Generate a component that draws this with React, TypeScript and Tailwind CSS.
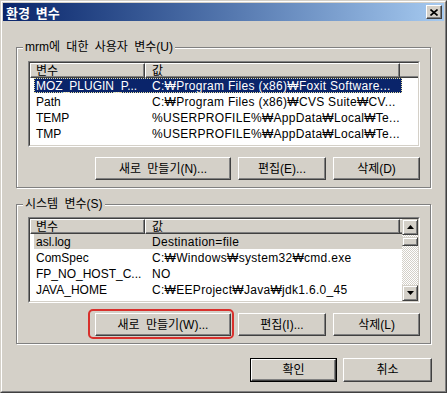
import React from 'react';

type Var = { name: string; value: string; sel?: 'blue' | 'gray' };

const userVars: Var[] = [
  { name: 'MOZ_PLUGIN_P...', value: 'C:₩Program Files (x86)₩Foxit Software...', sel: 'blue' },
  { name: 'Path', value: 'C:₩Program Files (x86)₩CVS Suite₩CV...' },
  { name: 'TEMP', value: '%USERPROFILE%₩AppData₩Local₩Te...' },
  { name: 'TMP', value: '%USERPROFILE%₩AppData₩Local₩Te...' },
];

const systemVars: Var[] = [
  { name: 'asl.log', value: 'Destination=file', sel: 'gray' },
  { name: 'ComSpec', value: 'C:₩Windows₩system32₩cmd.exe' },
  { name: 'FP_NO_HOST_C...', value: 'NO' },
  { name: 'JAVA_HOME', value: 'C:₩EEProject₩Java₩jdk1.6.0_45' },
  { name: 'JRE_HOME', value: 'C:₩EEProject₩Java₩jdk1.6.0_45₩jre' },
];

// classic raised 3D button
const Button = ({ label, w, h = 'h-[23px]', isDefault = false }: { label: string; w: string; h?: string; isDefault?: boolean }) => {
  const inner = (
    <div className="h-full w-full border border-t-white border-l-white border-r-[#404040] border-b-[#404040] shadow-[inset_-1px_-1px_0_#808080] flex items-center justify-center [word-spacing:3px]">
      {label}
    </div>
  );
  if (isDefault) {
    return <div className={`${w} ${h} border border-black`}>{inner}</div>;
  }
  return <div className={`${w} ${h}`}>{inner}</div>;
};

const Row = ({ v }: { v: Var }) => {
  const tone =
    v.sel === 'blue' ? 'bg-[#0a246a] text-white outline outline-1 outline-dotted outline-[#e8e0a0] -outline-offset-1' : v.sel === 'gray' ? 'bg-[#d4d0c8]' : '';
  return (
    <div className="h-[16px] flex pl-[4px] shrink-0">
      <div className={`flex items-center w-[368px] h-[15px] ${tone}`}>
        <span className="w-[111px] pl-[2px] whitespace-nowrap overflow-hidden">{v.name}</span>
        <span className="pl-[7px] whitespace-nowrap tracking-[0.3px]">{v.value}</span>
      </div>
    </div>
  );
};

const Header = ({ width }: { width: string }) => (
  <div className={`flex h-[15px] shrink-0 ${width} bg-[#d4d0c8]`}>
    <div className="w-[115px] h-full border border-t-white border-l-white border-r-[#404040] border-b-[#404040] shadow-[inset_-1px_-1px_0_#808080] pl-[5px] flex items-center">변수</div>
    <div className="w-[255px] h-full border border-t-white border-l-white border-r-[#404040] border-b-[#404040] shadow-[inset_-1px_-1px_0_#808080] pl-[6px] flex items-center">값</div>
    <div className="flex-1 h-full border-t border-t-white border-b border-b-[#404040] shadow-[inset_0_-1px_0_#808080]" />
  </div>
);

const Arrow = ({ up }: { up: boolean }) => (
  <div className="w-[16px] h-[16px] bg-[#d4d0c8] border border-t-[#d4d0c8] border-l-[#d4d0c8] border-r-[#404040] border-b-[#404040] shadow-[inset_1px_1px_0_#fff,inset_-1px_-1px_0_#808080] flex items-center justify-center">
    <svg width="7" height="4" viewBox="0 0 7 4">
      {up ? <path d="M3.5 0 L7 4 L0 4 Z" fill="#000" /> : <path d="M0 0 L7 0 L3.5 4 Z" fill="#000" />}
    </svg>
  </div>
);

const ListBox = ({ vars, scroll }: { vars: Var[]; scroll?: boolean }) => (
  <div className="ml-[11px] w-[392px] h-[86px] border border-t-[#808080] border-l-[#808080] border-r-white border-b-white">
    <div className="h-full border border-t-[#404040] border-l-[#404040] border-r-[#d4d0c8] border-b-[#d4d0c8] bg-white flex overflow-hidden">
      <div className="flex-1 flex flex-col overflow-hidden">
        <Header width="w-full" />
        {vars.map((v) => (
          <Row key={v.name} v={v} />
        ))}
      </div>
      {scroll && (
        <div className="w-[16px] h-full flex flex-col bg-[repeating-conic-gradient(#d4d0c8_0_25%,#ffffff_0_50%)] bg-[length:2px_2px]">
          <Arrow up />
          <div className="mt-[2px] w-[16px] h-[9px] bg-[#d4d0c8] border border-t-[#d4d0c8] border-l-[#d4d0c8] border-r-[#404040] border-b-[#404040] shadow-[inset_1px_1px_0_#fff,inset_-1px_-1px_0_#808080]" />
          <div className="flex-1" />
          <Arrow up={false} />
        </div>
      )}
    </div>
  </div>
);

const Group = ({ title, mt, listMt, children }: { title: string; mt: string; listMt: string; children: React.ReactNode }) => (
  <div className={`relative ${mt} ml-[13px] w-[415px] border border-[#808080] shadow-[inset_1px_1px_0_#fff,1px_1px_0_#fff]`}>
    <div className="absolute -top-[8px] left-[6px] px-[2px] bg-[#d4d0c8] leading-[14px] [word-spacing:3px]">{title}</div>
    <div className={listMt}>{children}</div>
  </div>
);

const ButtonRow = ({ labels, highlight }: { labels: string[]; highlight?: boolean }) => (
  <div className="mt-[10px] mb-[7px] flex justify-end gap-[7px] pr-[10px]">
    <div className="relative">
      <Button label={labels[0]} w="w-[136px]" />
      {highlight && (
        <div className="absolute -left-[7px] -right-[3px] -top-[4px] -bottom-[3px] border-2 border-[#d8302c] rounded-[5px]" />
      )}
    </div>
    <Button label={labels[1]} w="w-[88px]" />
    <Button label={labels[2]} w="w-[87px]" />
  </div>
);

export default function App() {
  return (
    <div className="w-[447px] h-[393px] bg-[#d4d0c8] border border-t-[#d4d0c8] border-l-[#d4d0c8] border-r-[#404040] border-b-[#404040] font-['Liberation_Sans','Noto_Sans_CJK_KR',sans-serif] text-[12px] text-black">
      <div className="h-full border border-t-white border-l-white border-r-[#808080] border-b-[#808080] p-px flex flex-col">
        {/* title bar */}
        <div className="h-[18px] shrink-0 bg-linear-to-r from-[#0a246a] to-[#a6caf0] flex items-center justify-between pl-[3px] pr-[2px]">
          <span className="text-white font-bold text-[13px] font-['Noto_Sans_CJK_KR',sans-serif] leading-none [word-spacing:3px]">환경 변수</span>
          <div className="w-[16px] h-[14px] bg-[#d4d0c8] border border-t-white border-l-white border-r-[#404040] border-b-[#404040] shadow-[inset_-1px_-1px_0_#808080] flex items-center justify-center">
            <svg width="8" height="7" viewBox="0 0 8 7">
              <path d="M0.5 0.5 L7.5 6.5 M7.5 0.5 L0.5 6.5" stroke="#000" strokeWidth="1.6" />
            </svg>
          </div>
        </div>

        <Group title="mrm에 대한 사용자 변수(U)" mt="mt-[26px]" listMt="mt-[13px]">
          <ListBox vars={userVars} />
          <ButtonRow labels={['새로 만들기(N)...', '편집(E)...', '삭제(D)']} />
        </Group>

        <Group title="시스템 변수(S)" mt="mt-[16px]" listMt="mt-[12px]">
          <ListBox vars={systemVars} scroll />
          <ButtonRow labels={['새로 만들기(W)...', '편집(I)...', '삭제(L)']} highlight />
        </Group>

        <div className="mt-[14px] flex justify-end gap-[6px] pr-[12px]">
          <Button label="확인" w="w-[87px]" h="h-[24px]" isDefault />
          <Button label="취소" w="w-[89px]" h="h-[24px]" />
        </div>
      </div>
    </div>
  );
}
